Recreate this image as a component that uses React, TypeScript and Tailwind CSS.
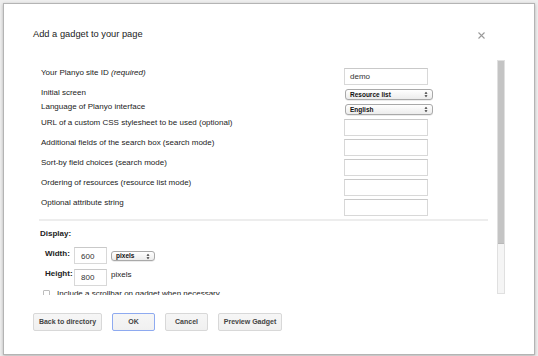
import React from 'react'

const fields = [
  { label: 'URL of a custom CSS stylesheet to be used (optional)' },
  { label: 'Additional fields of the search box (search mode)' },
  { label: 'Sort-by field choices (search mode)' },
  { label: 'Ordering of resources (resource list mode)' },
  { label: 'Optional attribute string' },
]

function SelectArrows() {
  return (
    <svg width="4" height="7" viewBox="0 0 4 7" className="shrink-0">
      <path d="M0.5 2.8 L2 0.8 L3.5 2.8 Z" fill="#333" />
      <path d="M0.5 4.2 L2 6.2 L3.5 4.2 Z" fill="#333" />
    </svg>
  )
}

function MacSelect({ value, width, height }: { value: string; width: string; height: string }) {
  return (
    <div
      className={`${width} ${height} flex items-center justify-between pl-[4px] pr-[4px] rounded-[3px] border border-[#a9a9a9] bg-gradient-to-b from-white to-[#ececec] shadow-[0_0.5px_0.5px_rgba(0,0,0,0.15)]`}
    >
      <span className="text-[6.5px] leading-[8px] font-bold text-[#111]">{value}</span>
      <SelectArrows />
    </div>
  )
}

function TextBox({ value, width = 'w-[84px]', height = 'h-[17px]', pad = 'pl-[5px] pt-[3px]' }: { value?: string; width?: string; height?: string; pad?: string }) {
  return (
    <div className={`${width} ${height} ${pad} shrink-0 border border-[#d8d8d8] border-t-[#c9c9c9] bg-white text-[8px] leading-[10px] text-[#333]`}>
      {value}
    </div>
  )
}

function Btn({ children, width, focus }: { children: React.ReactNode; width: string; focus?: boolean }) {
  return (
    <div
      className={`${width} h-[18px] flex items-center justify-center rounded-[2px] border ${
        focus ? 'border-[#8eaaf0]' : 'border-[#d8d8d8]'
      } bg-gradient-to-b from-[#f6f6f6] to-[#f0f0f0] text-[7px] font-bold text-[#444]`}
    >
      {children}
    </div>
  )
}

export default function App() {
  return (
    <div className="w-[538px] h-[356px] bg-[#eeeeee] pl-[3px] pt-[3px] overflow-hidden font-['Liberation_Sans',Arial,sans-serif]">
      <div className="w-[532px] h-[352px] border border-[#b4b4b4] bg-white shadow-[0_1px_3px_rgba(0,0,0,0.25)] flex flex-col">
        {/* Header */}
        <div className="h-[56px] shrink-0 flex items-start justify-between">
          <h2 className="ml-[29px] mt-[24px] text-[9.3px] leading-[12px] text-[#222]">
            Add a gadget to your page
          </h2>
          <svg width="7" height="7" viewBox="0 0 7 7" className="mt-[28px] mr-[49px]">
            <path d="M0.5 0.5 L6.5 6.5 M6.5 0.5 L0.5 6.5" stroke="#9a9a9a" strokeWidth="1.1" />
          </svg>
        </div>

        {/* Scrollable body */}
        <div className="ml-[29px] w-[472px] h-[235px] shrink-0 flex">
          <div className="w-[464px] h-full overflow-hidden pl-[8px] pt-[8px] text-[8px] leading-[10px] text-[#222]">
            <div className="flex items-start h-[17px] mb-[4px]">
              <div className="w-[303px]">
                Your Planyo site ID <i>(required)</i>
              </div>
              <TextBox value="demo" />
            </div>
            <div className="flex items-start h-[11px] mb-[4px]">
              <div className="w-[304px] -mt-[1px]">Initial screen</div>
              <MacSelect value="Resource list" width="w-[88px]" height="h-[11px]" />
            </div>
            <div className="flex items-start h-[11px] mb-[4px]">
              <div className="w-[304px] -mt-[2px]">Language of Planyo interface</div>
              <MacSelect value="English" width="w-[88px]" height="h-[11px]" />
            </div>
            {fields.map((f) => (
              <div key={f.label} className="flex items-start h-[17px] mb-[3px]">
                <div className="w-[303px] -mt-px">{f.label}</div>
                <TextBox />
              </div>
            ))}

            <div className="mt-[3px] -ml-[2px] w-[449px] h-[2px] bg-[#ededed]" />

            <div className="mt-[8px] -ml-px font-bold">Display:</div>

            <div className="mt-[8px] flex items-start h-[17px]">
              <div className="ml-[4px] w-[29px] mt-[2px] font-bold">Width:</div>
              <TextBox value="600" width="w-[33px]" pad="pl-[6px] pt-[4px]" />
              <div className="ml-[4px] mt-[4px]">
                <MacSelect value="pixels" width="w-[44px]" height="h-[10px]" />
              </div>
            </div>

            <div className="mt-[5px] flex items-start h-[17px]">
              <div className="ml-[4px] w-[29px] font-bold">Height:</div>
              <TextBox value="800" width="w-[33px]" pad="pl-[6px] pt-[3px]" />
              <div className="ml-[4px] mt-px">pixels</div>
            </div>

            <div className="mt-[4px] flex items-start">
              <div className="ml-[2px] w-[7px] h-[7px] border border-[#bdbdbd] rounded-[1px] bg-white" />
              <div className="ml-[7px] -mt-px">Include a scrollbar on gadget when necessary</div>
            </div>
          </div>

          {/* Scrollbar */}
          <div className="w-[8px] h-[234px] border border-[#e0e0e0] bg-[#f5f5f5]">
            <div className="h-[183px] bg-[#c4c4c4] border-b border-[#b8b8b8]" />
          </div>
        </div>

        {/* Footer */}
        <div className="flex-1 pl-[29px] pt-[18px] flex items-start gap-[10px]">
          <Btn width="w-[69px]">Back to directory</Btn>
          <Btn width="w-[43px]" focus>
            OK
          </Btn>
          <Btn width="w-[43px]">Cancel</Btn>
          <Btn width="w-[64px]">Preview Gadget</Btn>
        </div>
      </div>
    </div>
  )
}
